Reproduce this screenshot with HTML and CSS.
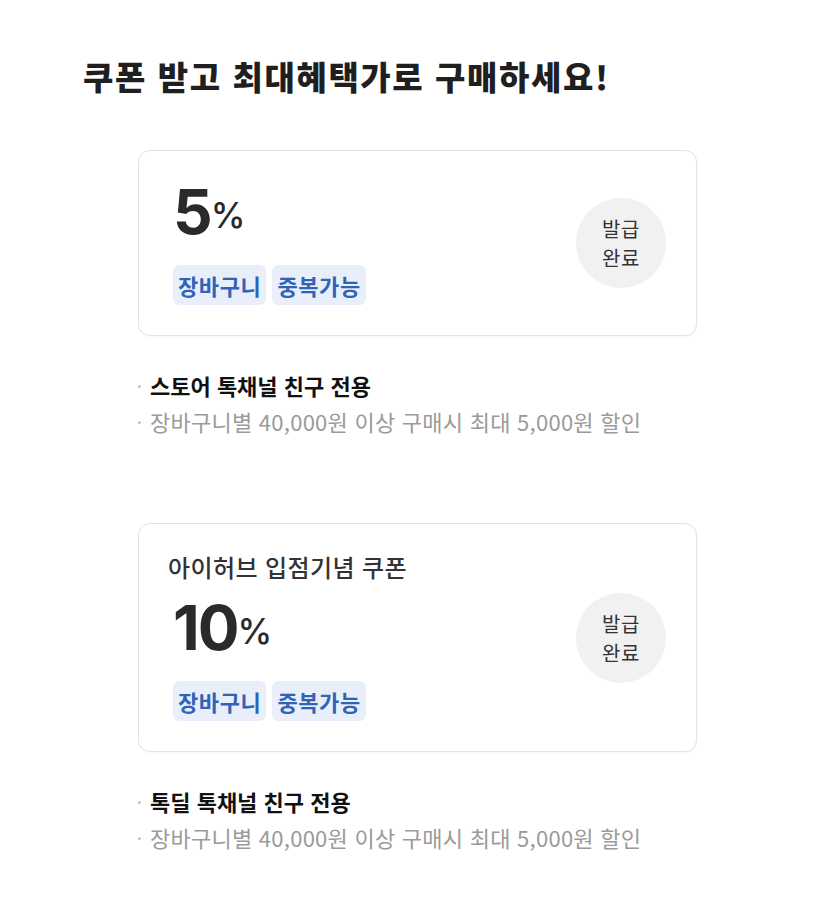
FILE: index.html
```html
<!DOCTYPE html>
<html lang="ko">
<head>
<meta charset="utf-8">
<title>쿠폰</title>
<link rel="stylesheet" href="styles.css">
</head>
<body>
<main class="page">
  <h1 class="page-title">쿠폰 받고 최대혜택가로 구매하세요!</h1>

  <section class="coupon">
    <div class="card">
      <div class="card-main">
        <div class="rate"><span class="rate-num">5</span><span class="rate-pct">%</span></div>
        <div class="tags"><span class="tag">장바구니</span><span class="tag">중복가능</span></div>
      </div>
      <div class="issued"><span>발급</span><span>완료</span></div>
    </div>
    <ul class="info">
      <li class="info-strong">스토어 톡채널 친구 전용</li>
      <li class="info-sub">장바구니별 40,000원 이상 구매시 최대 5,000원 할인</li>
    </ul>
  </section>

  <section class="coupon">
    <div class="card">
      <div class="card-main">
        <div class="card-title">아이허브 입점기념 쿠폰</div>
        <div class="rate"><span class="rate-num">10</span><span class="rate-pct">%</span></div>
        <div class="tags"><span class="tag">장바구니</span><span class="tag">중복가능</span></div>
      </div>
      <div class="issued"><span>발급</span><span>완료</span></div>
    </div>
    <ul class="info">
      <li class="info-strong">톡딜 톡채널 친구 전용</li>
      <li class="info-sub">장바구니별 40,000원 이상 구매시 최대 5,000원 할인</li>
    </ul>
  </section>
</main>
</body>
</html>
```

FILE: styles.css
```css
* { box-sizing: border-box; }
html, body { margin: 0; padding: 0; background: #fff; }
body {
  font-family: "Noto Sans CJK KR", "Noto Sans", sans-serif;
  color: #222;
}
.page {
  width: 835px;
  padding: 56px 0 20px;
}
.page-title {
  margin: 0 0 54px 83px;
  font-size: 33px;
  line-height: 40px;
  font-weight: 800;
  letter-spacing: 1.6px;
  color: #1f1f1f;
}
.coupon {
  width: 559px;
  margin: 0 auto 84px;
}
.coupon:last-child { margin-bottom: 0; }
.card {
  display: flex;
  align-items: center;
  justify-content: space-between;
  border: 1px solid #e2e2e2;
  border-radius: 12px;
  padding: 30px 30px 30px 34px;
  background: #fff;
  box-shadow: 0 1px 2px rgba(0,0,0,0.03);
}
.card-main {
  display: flex;
  flex-direction: column;
  align-items: flex-start;
}
.card-title {
  font-size: 24px;
  line-height: 26px;
  font-weight: 500;
  color: #333;
  letter-spacing: 0.4px;
  margin-left: -5px;
  margin-bottom: 17px;
}
.rate {
  display: flex;
  align-items: center;
  height: 62px;
  color: #2a2a2a;
  font-family: Inter, "Noto Sans", sans-serif;
}
.rate-num {
  font-size: 62px;
  line-height: 62px;
  font-weight: 700;
  letter-spacing: -2px;
}
.rate-pct {
  font-size: 35px;
  line-height: 35px;
  font-weight: 500;
  margin-left: 0;
  margin-top: 6px;
}
.tags {
  display: flex;
  gap: 6px;
  margin-top: 22px;
}
.tag {
  display: inline-flex;
  align-items: center;
  height: 40px;
  padding: 0 5px;
  border-radius: 6px;
  background: #e8effb;
  color: #3063b6;
  font-size: 22px;
  font-weight: 600;
  letter-spacing: 0.6px;
}
.issued {
  width: 90px;
  height: 90px;
  border-radius: 50%;
  background: #f1f1f1;
  display: flex;
  flex-direction: column;
  align-items: center;
  justify-content: center;
  text-align: center;
  font-size: 20px;
  line-height: 29px;
  letter-spacing: 0.5px;
  color: #333;
  flex-shrink: 0;
}
.issued span { display: block; }
.info {
  list-style: none;
  margin: 31px 0 0;
  padding: 0;
}
.info li {
  position: relative;
  padding-left: 12px;
  font-size: 22px;
  line-height: 36px;
}
.info li::before {
  content: "";
  position: absolute;
  left: 0;
  top: 18px;
  width: 3px;
  height: 3px;
  border-radius: 50%;
  background: #c4c4c4;
}
.info-strong {
  font-weight: 700;
  color: #111;
  letter-spacing: 0;
}
.info-sub {
  color: #9a9a9a;
  letter-spacing: 0.25px;
}
```
